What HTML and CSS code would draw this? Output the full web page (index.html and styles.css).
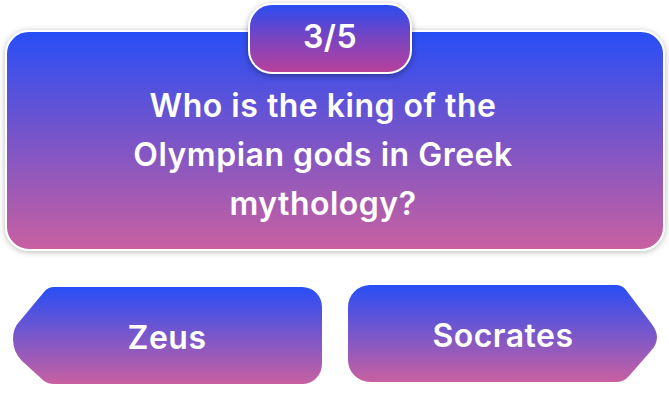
FILE: index.html
```html
<!DOCTYPE html>
<html>
<head>
<meta charset="utf-8">
<link rel="stylesheet" href="styles.css">
</head>
<body>
<main class="quiz">
  <section class="question-card">
    <div class="counter">3/5</div>
    <h1 class="question">Who is the king of the Olympian gods in Greek mythology?</h1>
  </section>
  <div class="answers">
    <button class="answer answer-left">
      <svg class="answer-shape" viewBox="0 0 312 97" preserveAspectRatio="none">
        <defs>
          <linearGradient id="gl" x1="0" y1="0" x2="0" y2="1">
            <stop offset="0" stop-color="#284ef6"/>
            <stop offset="1" stop-color="#c960a0"/>
          </linearGradient>
        </defs>
        <path fill="url(#gl)" d="M44 0 H292 A20 20 0 0 1 312 20 V77 A20 20 0 0 1 292 97 H44 Q38 97 34 94 L12 74 Q3 65 3 52 Q3 41 9 35 L34 5 Q38 0 44 0 Z"/>
      </svg>
      <span class="answer-label">Zeus</span>
    </button>
    <button class="answer answer-right">
      <svg class="answer-shape" viewBox="0 0 312 97" preserveAspectRatio="none">
        <defs>
          <linearGradient id="gr" x1="0" y1="0" x2="0" y2="1">
            <stop offset="0" stop-color="#284ef6"/>
            <stop offset="1" stop-color="#c960a0"/>
          </linearGradient>
        </defs>
        <path fill="url(#gr)" d="M22 0 H268 Q274 0 278 5 L303 38 Q309 46 309 52 Q309 60 302 67 L281 91 Q276 97 268 97 H22 A22 22 0 0 1 0 75 V22 A22 22 0 0 1 22 0 Z"/>
      </svg>
      <span class="answer-label">Socrates</span>
    </button>
  </div>
</main>
</body>
</html>
```
FILE: styles.css
```css
* { box-sizing: border-box; }
html, body { margin: 0; padding: 0; background: #ffffff; }
body {
  font-family: "Inter", "Open Sans", sans-serif;
  width: 669px;
  height: 411px;
  overflow: hidden;
}
.quiz {
  display: flex;
  flex-direction: column;
  padding: 30px 4px 0 5px;
}
.question-card {
  position: relative;
  height: 221px;
  border: 2px solid #ffffff;
  border-radius: 24px;
  background: linear-gradient(180deg, #284ef6 0%, #7a55c8 50%, #c860a0 100%);
  box-shadow: 0 1px 6px rgba(0, 0, 0, 0.28);
  display: flex;
  justify-content: center;
  padding-top: 49px;
  padding-right: 24px;
}
.counter {
  position: absolute;
  top: -29px;
  left: 241px;
  width: 164px;
  height: 71px;
  border: 2px solid #ffffff;
  border-radius: 24px;
  background: linear-gradient(180deg, #2b4cf0 0%, #7a44c0 50%, #b8409a 100%);
  box-shadow: 0 2px 6px rgba(0, 0, 0, 0.35);
  color: #ffffff;
  font-size: 32px;
  font-weight: 600;
  letter-spacing: 0.5px;
  display: flex;
  align-items: center;
  justify-content: center;
  padding-bottom: 4px;
}
.question {
  margin: 0;
  width: 430px;
  text-align: center;
  color: #ffffff;
  font-size: 32px;
  font-weight: 600;
  line-height: 49px;
  letter-spacing: 0.5px;
}
.answers {
  display: grid;
  grid-template-columns: 312px 312px;
  column-gap: 26px;
  margin-top: 36px;
  padding-left: 5px;
}
.answer {
  display: grid;
  width: 312px;
  height: 97px;
  padding: 0;
  border: 0;
  background: none;
  font: inherit;
  cursor: pointer;
}
.answer-right { margin-top: -2px; }
.answer-shape,
.answer-label {
  grid-area: 1 / 1;
}
.answer-shape {
  width: 312px;
  height: 97px;
  display: block;
}
.answer-label {
  align-self: center;
  justify-self: center;
  color: #ffffff;
  font-size: 32px;
  font-weight: 600;
  letter-spacing: 0.5px;
  padding-top: 4px;
}
.answer-left .answer-label { padding-left: 2px; }
.answer-right .answer-label { padding-right: 2px; }
```
